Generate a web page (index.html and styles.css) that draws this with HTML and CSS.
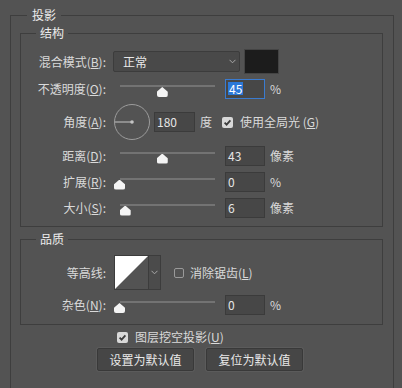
FILE: index.html
```html
<!DOCTYPE html>
<html lang="zh-CN">
<head>
    <meta charset="UTF-8">
    <title>投影</title>
    <link rel="stylesheet" href="styles.css">
</head>
<body>
    <div class="dialog">
        <fieldset class="group outer">
            <legend>投影</legend>

            <fieldset class="group">
                <legend>结构</legend>
                <div class="rows">
                    <div class="row row-blend">
                        <span class="lbl">混合模式(<u>B</u>):</span>
                        <div class="select">
                            <span>正常</span>
                            <svg class="chev" width="7" height="5" viewBox="0 0 7 5"><polyline points="0.5,0.8 3.5,3.8 6.5,0.8" fill="none" stroke="#a8a8a8" stroke-width="1"/></svg>
                        </div>
                        <span class="swatch"></span>
                    </div>

                    <div class="row row-short">
                        <span class="lbl">不透明度(<u>O</u>):</span>
                        <div class="slider"><span class="thumb" style="left: 45%"></span></div>
                        <span class="field focus"><span class="sel">45</span></span>
                        <span class="unit">%</span>
                    </div>

                    <div class="row row-angle">
                        <span class="lbl">角度(<u>A</u>):</span>
                        <svg class="dial" width="36" height="36" viewBox="0 0 36 36">
                            <circle cx="18" cy="18" r="17.5" fill="none" stroke="#9c9c9c" stroke-width="1"/>
                            <line x1="1" y1="18" x2="18" y2="18" stroke="#b4b4b4" stroke-width="1.2"/>
                            <circle cx="18" cy="18" r="1.8" fill="#c4c4c4"/>
                        </svg>
                        <span class="field field-angle">180</span>
                        <span class="unit">度</span>
                        <span class="check on"><svg width="11" height="11" viewBox="0 0 11 11"><polyline points="2.6,5.6 4.6,7.6 8.4,3.4" fill="none" stroke="#3c3c3c" stroke-width="1.8"/></svg></span>
                        <span class="check-text">使用全局光 (<u>G</u>)</span>
                    </div>

                    <div class="row">
                        <span class="lbl">距离(<u>D</u>):</span>
                        <div class="slider"><span class="thumb" style="left: 45%"></span></div>
                        <span class="field">43</span>
                        <span class="unit">像素</span>
                    </div>

                    <div class="row">
                        <span class="lbl">扩展(<u>R</u>):</span>
                        <div class="slider"><span class="thumb" style="left: 0%"></span></div>
                        <span class="field">0</span>
                        <span class="unit">%</span>
                    </div>

                    <div class="row">
                        <span class="lbl">大小(<u>S</u>):</span>
                        <div class="slider"><span class="thumb" style="left: 6%"></span></div>
                        <span class="field">6</span>
                        <span class="unit">像素</span>
                    </div>
                </div>
            </fieldset>

            <fieldset class="group quality">
                <legend>品质</legend>
                <div class="rows">
                    <div class="row row-contour">
                        <span class="lbl">等高线:</span>
                        <div class="contour">
                            <svg class="curve" width="33" height="33" viewBox="0 0 33 33"><polygon points="0,0 33,0 0,33" fill="#ffffff"/></svg>
                            <span class="drop"><svg width="7" height="5" viewBox="0 0 7 5"><polyline points="0.5,0.8 3.5,3.8 6.5,0.8" fill="none" stroke="#a8a8a8" stroke-width="1"/></svg></span>
                        </div>
                        <span class="check off"></span>
                        <span class="check-text">消除锯齿(<u>L</u>)</span>
                    </div>

                    <div class="row row-short">
                        <span class="lbl">杂色(<u>N</u>):</span>
                        <div class="slider"><span class="thumb" style="left: 0%"></span></div>
                        <span class="field">0</span>
                        <span class="unit">%</span>
                    </div>
                </div>
            </fieldset>

            <div class="knockout">
                <span class="check on"><svg width="11" height="11" viewBox="0 0 11 11"><polyline points="2.6,5.6 4.6,7.6 8.4,3.4" fill="none" stroke="#3c3c3c" stroke-width="1.8"/></svg></span>
                <span>图层挖空投影(<u>U</u>)</span>
            </div>

            <div class="buttons">
                <button class="btn">设置为默认值</button>
                <button class="btn">复位为默认值</button>
            </div>
        </fieldset>
    </div>
</body>
</html>
```

FILE: styles.css
```css
html, body {
    margin: 0;
    overflow: hidden;
}
body {
    background-color: #535353;
    color: #dadada;
    font-family: "Noto Sans CJK SC", "Noto Sans", sans-serif;
    font-size: 12px;
    line-height: 16px;
}
.dialog {
    padding: 7px 8px 0 10px;
}

/* group boxes */
.group {
    margin: 0;
    padding: 8px 0 8px 0;
    border: 1px solid #3e3e3e;
}
.group > legend {
    margin-left: 15px;
    padding: 0 4px;
    color: #ececec;
}
.outer {
    padding: 2px 10px 20px 9px;
}
.outer > legend {
    margin-left: 7px;
    padding: 0 5px;
}
.quality {
    margin-top: 4px;
    padding-bottom: 9px;
}

/* rows */
.rows {
    display: flex;
    flex-direction: column;
    gap: 5px;
}
.row {
    display: flex;
    align-items: center;
    height: 21px;
}
.row-short {
    height: 20px;
}
.row-blend {
    height: 25px;
}
.row-angle {
    height: 36px;
}
.row-contour {
    height: 35px;
}
.lbl {
    flex: none;
    width: 85px;
    text-align: right;
}
u {
    text-underline-offset: 1px;
}

/* blend mode */
.select {
    flex: none;
    display: flex;
    align-items: center;
    justify-content: space-between;
    box-sizing: border-box;
    width: 127px;
    height: 21px;
    margin-left: 7px;
    padding: 0 3px 0 9px;
    border: 1px solid #3c3c3c;
    border-radius: 2px;
    background-color: #494949;
    color: #e8e8e8;
}
.swatch {
    flex: none;
    box-sizing: border-box;
    width: 35px;
    height: 25px;
    margin-left: 4px;
    border: 1px solid #444;
    background-color: #1c1c1c;
}

/* sliders */
.slider {
    flex: none;
    position: relative;
    width: 95px;
    height: 20px;
    margin-left: 14px;
}
.slider::before {
    content: "";
    position: absolute;
    left: 0;
    right: 0;
    top: 6px;
    height: 2px;
    background-color: #737373;
}
.thumb {
    position: absolute;
    top: 8px;
    width: 11px;
    height: 10px;
    margin-left: -6px;
    background-color: #f4f4f4;
    border-radius: 2px;
    clip-path: polygon(50% 0, 100% 48%, 100% 100%, 0 100%, 0 48%);
}

/* number fields */
.field {
    flex: none;
    box-sizing: border-box;
    width: 40px;
    height: 20px;
    margin-left: 10px;
    padding: 0 2px;
    border: 1px solid #3b3b3b;
    background-color: #474747;
    color: #e6e6e6;
    line-height: 18px;
}
.field.focus {
    border-color: #3a7bd0;
}
.field-angle {
    width: 41px;
    margin-left: 4px;
}
.sel {
    display: inline-block;
    padding: 0 1px;
    line-height: 13px;
    background-color: #2b78d8;
    color: #fff;
}
.unit {
    margin-left: 5px;
}
.dial {
    flex: none;
    margin-left: 8px;
}

/* checkboxes */
.check {
    flex: none;
    display: flex;
    box-sizing: border-box;
    width: 11px;
    height: 11px;
    border-radius: 2px;
}
.check.on {
    background-color: #d8d8d8;
}
.check.off {
    width: 10px;
    height: 10px;
    border: 1px solid #9a9a9a;
    margin-left: 13px;
}
.row-angle .check {
    margin-left: 10px;
}
.check-text {
    margin-left: 7px;
}
.row-contour .check-text {
    margin-left: 6px;
}

/* contour picker */
.contour {
    flex: none;
    display: flex;
    margin-left: 8px;
    border: 1px solid #3c3c3c;
}
.curve {
    display: block;
}
.drop {
    display: flex;
    align-items: center;
    justify-content: center;
    width: 11px;
    border-left: 1px solid #3c3c3c;
    background-color: #4b4b4b;
}

/* bottom */
.knockout {
    display: flex;
    align-items: center;
    gap: 7px;
    height: 14px;
    margin: 5px 0 0 97px;
}
.buttons {
    display: flex;
    gap: 12px;
    margin: 4px 0 0 77px;
}
.btn {
    box-sizing: border-box;
    width: 97px;
    height: 23px;
    padding: 0;
    border: 1px solid #393939;
    border-radius: 2px;
    background-color: #464646;
    box-shadow: 0 0 0 1px #5b5b5b;
    color: #e8e8e8;
    font: inherit;
}
```
